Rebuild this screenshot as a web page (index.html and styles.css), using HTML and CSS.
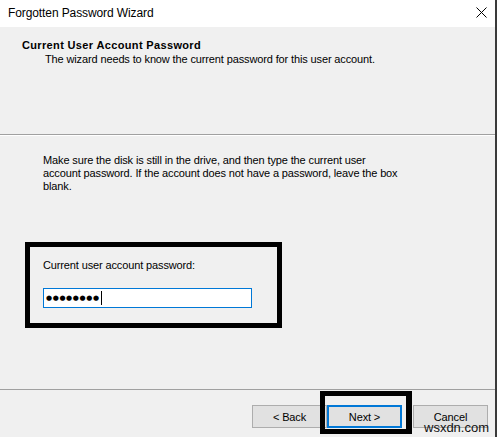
FILE: index.html
```html
<!DOCTYPE html>
<html>
<head>
<meta charset="utf-8">
<link rel="stylesheet" href="styles.css">
</head>
<body>
<div class="window">
  <div class="titlebar">
    <span class="title">Forgotten Password Wizard</span>
    <svg class="close" width="11" height="11" viewBox="0 0 11 11"><path d="M0.5 0.5 L10.5 10.5 M10.5 0.5 L0.5 10.5" stroke="#000" stroke-width="1" fill="none"/></svg>
  </div>
  <div class="header">
    <div class="h-title">Current User Account Password</div>
    <div class="h-sub">The wizard needs to know the current password for this user account.</div>
  </div>
  <div class="content">
    <p class="desc">Make sure the disk is still in the drive, and then type the current user<br>account password. If the account does not have a password, leave the box<br>blank.</p>
    <div class="highlight">
      <div class="label">Current user account password:</div>
      <div class="input"><span class="dots">&#9679;&#9679;&#9679;&#9679;&#9679;&#9679;&#9679;&#9679;</span><span class="caret"></span></div>
    </div>
  </div>
  <div class="footer">
    <div class="btn">&lt; Back</div>
    <div class="btn primary">Next &gt;</div>
    <div class="btn cancel">Cancel</div>
    <div class="next-frame"></div>
    <div class="watermark">wsxdn.com</div>
  </div>
</div>
</body>
</html>
```

FILE: styles.css
```css
html, body {
  margin: 0;
  padding: 0;
}
body {
  background: #f0f0f0;
  font-family: "Liberation Sans", Arial, sans-serif;
  font-size: 11px;
  letter-spacing: -0.13px;
  color: #000;
}
.window {
  width: 497px;
  height: 437px;
  box-sizing: border-box;
  border-right: 2px solid #3a3a3a;
  display: flex;
  flex-direction: column;
  background: #f0f0f0;
  position: relative;
  overflow: hidden;
}
.titlebar {
  height: 27px;
  background: #fff;
  display: flex;
  align-items: center;
  justify-content: space-between;
  padding: 0 8px 2px 8px;
  box-sizing: border-box;
  flex: none;
}
.title {
  font-size: 12px;
  letter-spacing: -0.1px;
  color: #000;
}
.close {
  margin-right: 0;
}
.header {
  height: 108px;
  box-sizing: border-box;
  padding: 12px 0 0 22px;
  border-bottom: 1px solid #a0a0a0;
  flex: none;
  line-height: 13px;
}
.h-title {
  font-weight: bold;
  letter-spacing: 0.35px;
}
.h-sub {
  margin-top: 1px;
  padding-left: 23px;
}
.content {
  border-top: 1px solid #fff;
  flex: 1;
  padding: 18px 0 0 25px;
}
.desc {
  margin: 0 0 49px 18px;
  line-height: 13px;
  white-space: nowrap;
}
.highlight {
  width: 257px;
  box-sizing: border-box;
  border: 5px solid #000;
  padding: 12px 25px 15px 13px;
}
.label {
  line-height: 13px;
}
.input {
  margin-top: 16px;
  height: 20px;
  box-sizing: border-box;
  border: 1px solid #0078d7;
  background: #fff;
  display: flex;
  align-items: center;
  padding-left: 2px;
}
.dots {
  font-family: "DejaVu Sans", sans-serif;
  font-size: 7px;
  letter-spacing: 0.6px;
  line-height: 18px;
}
.caret {
  width: 1px;
  height: 14px;
  background: #000;
  margin-left: 1px;
}
.footer {
  flex: none;
  height: 48px;
  box-sizing: border-box;
  border-top: 1px solid #a0a0a0;
  padding: 15px 7px 0 0;
  display: flex;
  justify-content: flex-end;
  align-items: flex-start;
  position: relative;
}
.btn {
  width: 75px;
  height: 23px;
  box-sizing: border-box;
  background: #e1e1e1;
  border: 1px solid #adadad;
  display: flex;
  align-items: center;
  justify-content: center;
  font-size: 11px;
}
.btn.primary {
  border: 2px solid #0078d7;
}
.btn.cancel {
  margin-left: 11px;
}
.next-frame {
  position: absolute;
  left: 320px;
  top: 1px;
  width: 92px;
  height: 43px;
  box-sizing: border-box;
  border: 5px solid #000;
  border-right-width: 6px;
}
.watermark {
  position: absolute;
  left: 424px;
  top: 30px;
  font-size: 13px;
  line-height: 15px;
  letter-spacing: 0;
  color: #111;
}
```
